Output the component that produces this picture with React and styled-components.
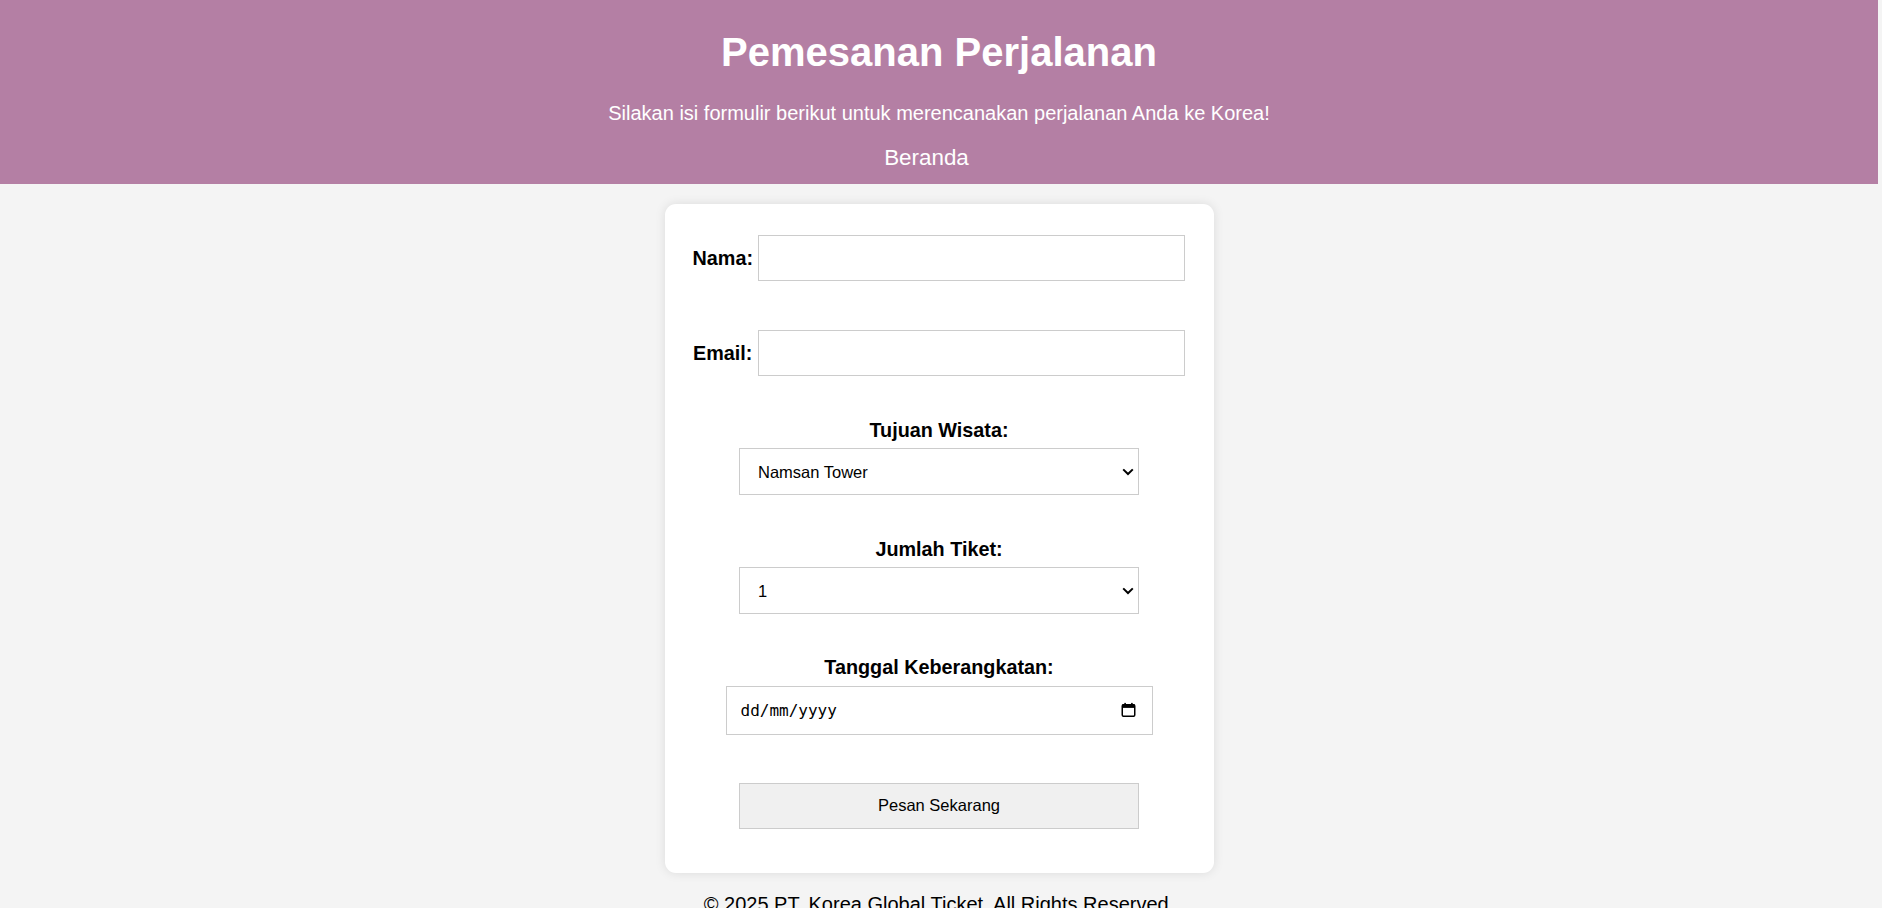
import React from "react";
import styled, { createGlobalStyle } from "styled-components";

const GlobalStyle = createGlobalStyle`
  html, body {
    margin: 0;
    padding: 0;
    background: #f4f4f4;
  }
  body {
    font-family: "Liberation Sans", Arial, sans-serif;
    color: #000;
  }
  * { box-sizing: border-box; }
`;

const Page = styled.div`
  display: flex;
  flex-direction: column;
  align-items: center;
  width: calc(100% - 4px);
`;

const Header = styled.header`
  width: 100%;
  background: #b47fa4;
  color: #fff;
  text-align: center;
  padding: 30px 0 13.6px;
  display: flex;
  flex-direction: column;
  align-items: center;
`;

const Title = styled.h1`
  margin: 0;
  font-size: 40px;
  font-weight: bold;
  line-height: 45.5px;
`;

const Subtitle = styled.p`
  margin: 26.5px 0 0;
  font-size: 20px;
  line-height: 22.8px;
`;

const Nav = styled.nav`
  margin-top: 20.2px;
  padding-right: 25px;
`;

const NavLink = styled.a`
  font-size: 22.4px;
  line-height: 25.4px;
  color: #fff;
  text-decoration: none;
  cursor: pointer;
`;

const Card = styled.form`
  margin-top: 20px;
  width: 549px;
  background: #fff;
  border-radius: 11px;
  box-shadow: 0 0 11px rgba(0, 0, 0, 0.1);
  padding: 31px 22px 43.8px;
  display: flex;
  flex-direction: column;
  align-items: center;
`;

const InlineRow = styled.div`
  display: flex;
  align-items: center;
  justify-content: center;
  gap: 5.5px;
  margin-bottom: ${(p) => p.$mb}px;
`;

const Label = styled.label`
  font-size: 19.8px;
  font-weight: bold;
  line-height: 22.75px;
  display: block;
`;

const StackGroup = styled.div`
  display: flex;
  flex-direction: column;
  align-items: center;
  margin-bottom: ${(p) => p.$mb}px;
  ${Label} {
    margin-bottom: ${(p) => p.$lg}px;
  }
`;

const TextInput = styled.input`
  width: 427px;
  height: 46.2px;
  border: 1px solid #ccc;
  border-radius: 0;
  padding: 0 13px;
  font-family: "Liberation Sans", Arial, sans-serif;
  font-size: 16.5px;
  background: #fff;
  outline: none;
`;

const ControlWrap = styled.div`
  position: relative;
  width: ${(p) => p.$w}px;
`;

const Select = styled.select`
  appearance: none;
  -webkit-appearance: none;
  width: 100%;
  height: 47.3px;
  border: 1px solid #ccc;
  border-radius: 0;
  padding: 0 30px 0 18px;
  font-family: "Liberation Sans", Arial, sans-serif;
  font-size: 16.5px;
  background: #fff;
  color: #000;
  outline: none;
`;

const Chevron = styled.svg`
  position: absolute;
  right: 5px;
  top: 50%;
  width: 12px;
  height: 8px;
  transform: translateY(-50%);
  pointer-events: none;
`;

const DateInput = styled.input`
  width: 100%;
  height: 48.4px;
  border: 1px solid #ccc;
  border-radius: 0;
  padding: 0 40px 0 14px;
  font-family: "DejaVu Sans Mono", "Liberation Mono", monospace;
  font-size: 16px;
  background: #fff;
  color: #000;
  outline: none;
  &::placeholder {
    color: #000;
    opacity: 1;
  }
`;

const CalendarIcon = styled.svg`
  position: absolute;
  right: 17px;
  top: 50%;
  width: 15px;
  height: 15px;
  transform: translateY(-50%);
  pointer-events: none;
`;

const SubmitButton = styled.button`
  width: 400px;
  height: 46.2px;
  border: 1px solid #ccc;
  border-radius: 0;
  background: #f0f0f0;
  color: #000;
  font-family: "Liberation Sans", Arial, sans-serif;
  font-size: 16.5px;
  cursor: pointer;
`;

const Footer = styled.footer`
  margin-top: 20px;
  font-size: 20px;
  line-height: 22.8px;
  text-align: center;
  padding-bottom: 11px;
`;

function ChevronDown() {
  return (
    <Chevron viewBox="0 0 12 8" aria-hidden="true">
      <path d="M1.2 1.4 L6 6 L10.8 1.4" fill="none" stroke="#000" strokeWidth="2" />
    </Chevron>
  );
}

function Calendar() {
  return (
    <CalendarIcon viewBox="0 0 15 15" aria-hidden="true">
      <rect x="1.25" y="2.25" width="12.5" height="11.5" rx="1.2" fill="none" stroke="#000" strokeWidth="1.5" />
      <rect x="1" y="2" width="13" height="3.4" fill="#000" />
      <rect x="3.3" y="0.3" width="1.6" height="2.5" fill="#000" />
      <rect x="10.1" y="0.3" width="1.6" height="2.5" fill="#000" />
    </CalendarIcon>
  );
}

export default function App() {
  return (
    <>
      <GlobalStyle />
      <Page>
        <Header>
          <Title>Pemesanan Perjalanan</Title>
          <Subtitle>Silakan isi formulir berikut untuk merencanakan perjalanan Anda ke Korea!</Subtitle>
          <Nav>
            <NavLink href="#">Beranda</NavLink>
          </Nav>
        </Header>

        <Card onSubmit={(e) => e.preventDefault()}>
          <InlineRow $mb={48.8}>
            <Label htmlFor="nama">Nama:</Label>
            <TextInput id="nama" type="text" />
          </InlineRow>
          <InlineRow $mb={42.4}>
            <Label htmlFor="email">Email:</Label>
            <TextInput id="email" type="email" />
          </InlineRow>

          <StackGroup $mb={42.8} $lg={6.6}>
            <Label htmlFor="tujuan">Tujuan Wisata:</Label>
            <ControlWrap $w={400}>
              <Select id="tujuan" defaultValue="Namsan Tower">
                <option>Namsan Tower</option>
                <option>Gyeongbokgung Palace</option>
                <option>Pulau Jeju</option>
                <option>Busan Haeundae</option>
                <option>Lotte World</option>
              </Select>
              <ChevronDown />
            </ControlWrap>
          </StackGroup>

          <StackGroup $mb={42} $lg={6.2}>
            <Label htmlFor="jumlah">Jumlah Tiket:</Label>
            <ControlWrap $w={400}>
              <Select id="jumlah" defaultValue="1">
                <option>1</option>
                <option>2</option>
                <option>3</option>
                <option>4</option>
                <option>5</option>
              </Select>
              <ChevronDown />
            </ControlWrap>
          </StackGroup>

          <StackGroup $mb={48.3} $lg={7.2}>
            <Label htmlFor="tanggal">Tanggal Keberangkatan:</Label>
            <ControlWrap $w={427}>
              <DateInput id="tanggal" type="text" placeholder="dd/mm/yyyy" />
              <Calendar />
            </ControlWrap>
          </StackGroup>

          <SubmitButton type="submit">Pesan Sekarang</SubmitButton>
        </Card>

        <Footer>© 2025 PT. Korea Global Ticket. All Rights Reserved.</Footer>
      </Page>
    </>
  );
}
